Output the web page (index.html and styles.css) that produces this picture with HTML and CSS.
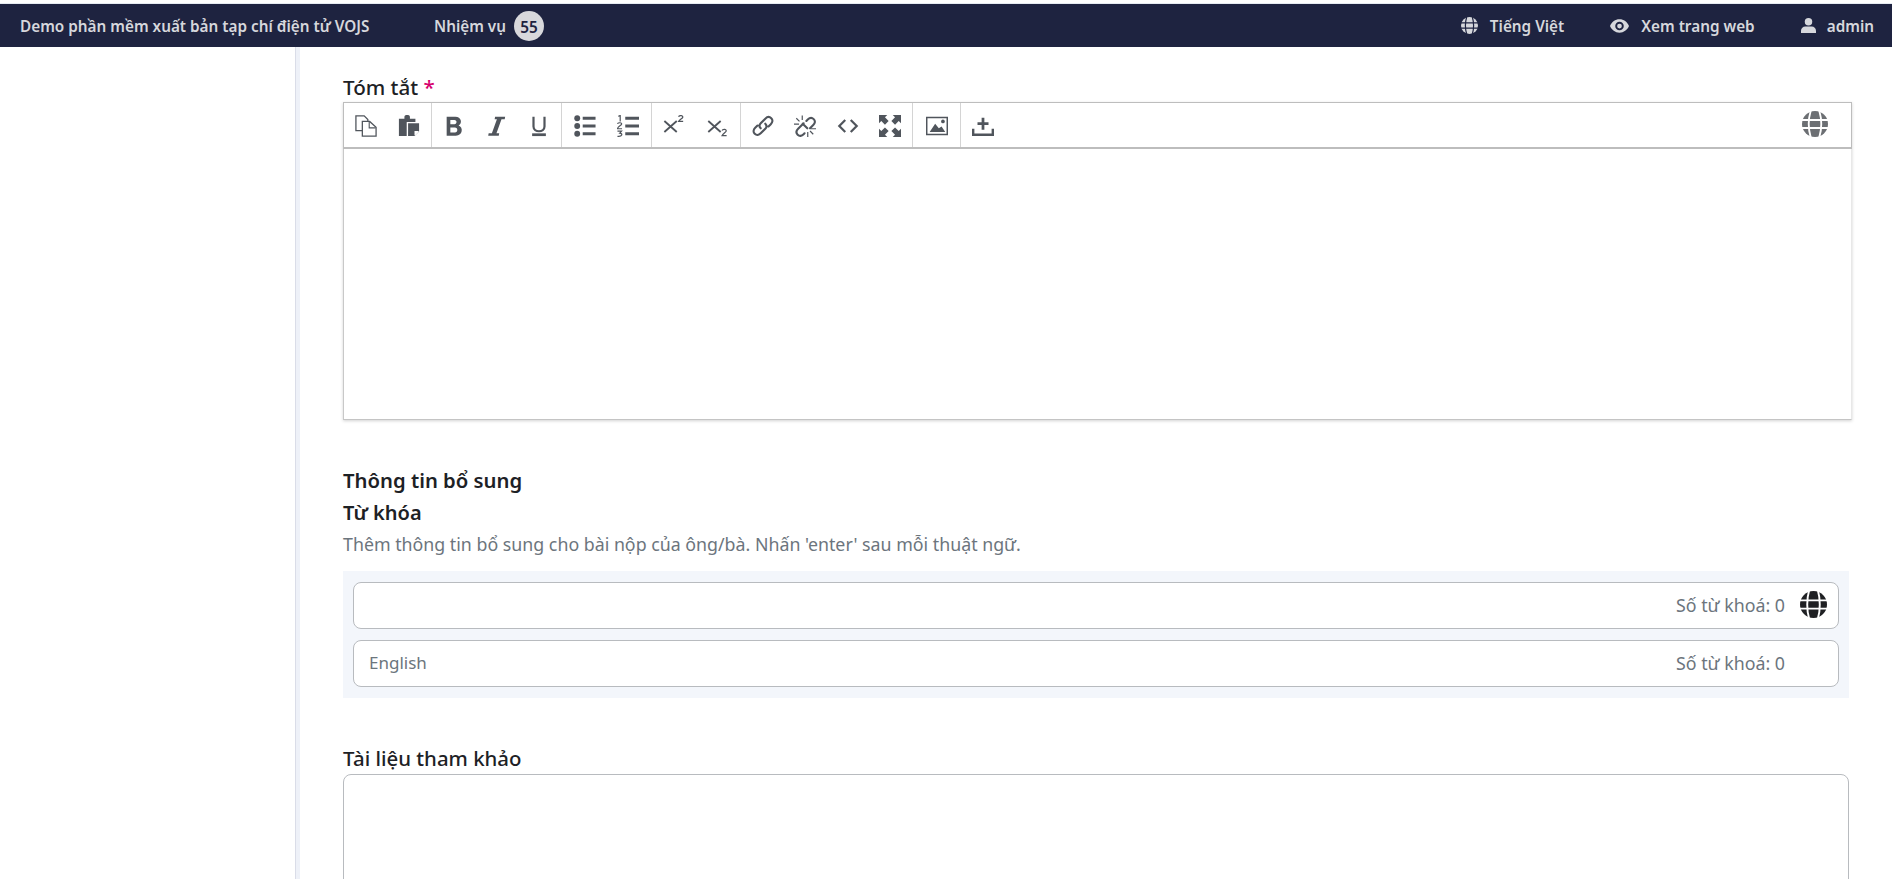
FILE: index.html
```html
<!DOCTYPE html>
<html lang="vi">
<head>
<meta charset="utf-8">
<title>Tóm tắt</title>
<link rel="stylesheet" href="styles.css">
</head>
<body>
<svg class="defs" width="0" height="0" aria-hidden="true">
  <symbol id="globe" viewBox="0 0 24 24">
    <circle cx="12" cy="12" r="12" fill="currentColor"/>
    <g fill="none" stroke="var(--gl, #fff)" stroke-width="1.7">
      <path d="M0 8.300H24M0 15.700H24"/>
      <path d="M8 0C5.900 7 5.900 17 8 24M16 0C18.100 7 18.100 17 16 24"/>
    </g>
  </symbol>
</svg>
<div class="top-strip"></div>
<header class="topbar">
  <div class="nav-left">
    <a class="brand">Demo phần mềm xuất bản tạp chí điện tử VOJS</a>
    <a class="tasks">Nhiệm vụ <span class="badge">55</span></a>
  </div>
  <div class="nav-right">
    <a class="nav-item"><svg class="nav-icon"><use href="#globe"/></svg>Tiếng Việt</a>
    <a class="nav-item">
      <svg class="nav-icon nav-eye" viewBox="0 0 20 14"><path fill="currentColor" fill-rule="evenodd" d="M10 0C5.500 0 1.800 2.800 0 7c1.800 4.200 5.500 7 10 7s8.200-2.800 10-7c-1.800-4.200-5.500-7-10-7zm0 11.500A4.500 4.500 0 1 1 10 2.500a4.500 4.500 0 0 1 0 9zM10 4.500a2.500 2.500 0 1 0 0 5 2.500 2.500 0 0 0 0-5z"/></svg>Xem trang web</a>
    <a class="nav-item">
      <svg class="nav-icon nav-user" viewBox="0 0 16 16"><circle cx="8" cy="4" r="4" fill="currentColor"/><path fill="currentColor" d="M0 16v-2.500C0 10.800 2.200 9 4.500 9h7c2.300 0 4.500 1.800 4.500 4.500V16z"/></svg>admin</a>
  </div>
</header>
<div class="page">
  <aside class="sidebar"></aside>
  <main class="content">
    <label class="field-label">Tóm tắt <span class="req">*</span></label>
    <section class="editor">
      <div class="toolbar">
        <div class="tb-group tb-first">
          <span class="tb-btn"><svg viewBox="0 0 24 24"><path fill="none" stroke="currentColor" stroke-width="1.400" d="M1 1h9l4 4v12H1z"/><path fill="#fff" stroke="currentColor" stroke-width="1.400" d="M8 7h8l7 6.500V23H8z"/><path fill="none" stroke="currentColor" stroke-width="1.200" d="M15.500 7.500v6.500h7"/></svg></span>
          <span class="tb-btn"><svg viewBox="0 0 24 24"><path fill="currentColor" d="M1 4h6V2c0-1 1-2 2-2h2c1 0 2 1 2 2v2h6v3.500H9.500V23H1z"/><path fill="currentColor" d="M11 9h12v9l-5 5h-7z"/><path fill="#fff" d="M18 22v-4.500h4.500v1l-3.500 3.500z"/></svg></span>
        </div>
        <div class="tb-group tb-format">
          <span class="tb-btn"><svg viewBox="0 0 24 24"><path fill="currentColor" fill-rule="evenodd" d="M4 2h9.500c6.500 0 8 7 3.500 9.500 5.500 2 4.500 11-3 11H4zm4 3.500v4.500h4.500c3 0 3-4.500 0-4.500zm0 8V19h5c3.500 0 3.500-5.500 0-5.500z"/></svg></span>
          <span class="tb-btn"><svg viewBox="0 0 24 24"><path fill="currentColor" d="M11 2h11l-.500 2.600h-3.500L12.500 20h3l-.500 2.600H3.500L4 20h3.500L13 4.600h-2.500z"/></svg></span>
          <span class="tb-btn"><svg viewBox="0 0 24 24"><path fill="none" stroke="currentColor" stroke-width="2.400" d="M6 2v10.500c0 7 12 7 12 0V2"/><path fill="currentColor" d="M4.500 20h15v3h-15z"/></svg></span>
        </div>
        <div class="tb-group">
          <span class="tb-btn"><svg viewBox="0 0 24 24"><g fill="currentColor"><circle cx="3.500" cy="3.500" r="3.200"/><circle cx="3.500" cy="12" r="3.200"/><circle cx="3.500" cy="20.500" r="3.200"/><path d="M9.500 2h14v3.200h-14zM9.500 10.400h14v3.200h-14zM9.500 18.800h14v3.200h-14z"/></g></svg></span>
          <span class="tb-btn"><svg viewBox="0 0 24 24"><g fill="currentColor"><path d="M9 2h15v3.200H9zM9 10.400h15v3.200H9zM9 18.800h15v3.200H9z"/></g><g fill="none" stroke="currentColor" stroke-width="1.300"><path d="M1.500 1.500l2-1V7M.5 9.500c1-1.500 5-1.500 4.500.5-.300 1.500-4 2.500-4.500 5H5.500M.5 17.500h4.500L3 19.800c3.500 0 3 4-2.500 3.500"/></g></svg></span>
        </div>
        <div class="tb-group tb-script">
          <span class="tb-btn"><svg viewBox="0 0 24 24"><path fill="none" stroke="currentColor" stroke-width="2" d="M1.500 6.500l13.500 12M15 6.500L1.500 18.500"/><path fill="none" stroke="currentColor" stroke-width="1.400" d="M17 2c.8-2 5-1.700 4.500.5-.3 1.300-3.500 2.500-4.500 4.500h5"/></svg></span>
          <span class="tb-btn"><svg viewBox="0 0 24 24"><path fill="none" stroke="currentColor" stroke-width="2" d="M2.500 6.500l13.500 12M16 6.500L2.500 18.500"/><path fill="none" stroke="currentColor" stroke-width="1.400" d="M17.500 17c.8-2 5-1.700 4.500.5-.3 1.300-3.500 2.500-4.500 5h5"/></svg></span>
        </div>
        <div class="tb-group tb-wide">
          <span class="tb-btn"><svg viewBox="0 0 24 24"><path fill="none" stroke="currentColor" stroke-width="2.300" stroke-linecap="round" d="M9.500 14.500c-1.800-1.800-1.800-3.700 0-5.500l5-5c2-2 4.500-2.500 6.500-.5s1.500 4.500-.5 6.500l-2.500 2.500M14.500 9.500c1.800 1.800 1.800 3.700 0 5.500l-5 5c-2 2-4.500 2.500-6.500.5s-1.500-4.500.5-6.500l2.500-2.500"/></svg></span>
          <span class="tb-btn"><svg viewBox="0 0 24 24"><path fill="none" stroke="currentColor" stroke-width="2.300" stroke-linecap="round" d="M13.500 6.500L15 5c2-2 4.500-2.500 6.500-.5s1.500 4.500-.5 6.500l-3.500 3.500M10.500 9l-6 6c-2 2-2.500 4.500-.5 6.500s4.500 1.500 6.500-.5l1-1M9.500 9.500l5 5"/><path fill="none" stroke="currentColor" stroke-width="1.300" d="M9 .500v5M2.500 3.500l3.500 3.500M0 10h5.500M24 15h-5.500M17.500 17.500l3.500 3.500M15 18.500V24"/></svg></span>
          <span class="tb-btn"><svg viewBox="0 0 24 24"><path fill="none" stroke="currentColor" stroke-width="2.400" d="M9 5.500L2.500 12 9 18.500M15 5.500l6.500 6.500-6.500 6.500"/></svg></span>
          <span class="tb-btn"><svg viewBox="0 0 24 24"><path fill="currentColor" d="M0 0h9L6.500 2.500l4 4-4 4-4-4L0 9zM24 0v9l-2.500-2.500-4 4-4-4 4-4L15 0zM0 24v-9l2.500 2.500 4-4 4 4-4 4L9 24zM24 24h-9l2.500-2.500-4-4 4-4 4 4L24 15z"/></svg></span>
        </div>
        <div class="tb-group tb-image">
          <span class="tb-btn"><svg viewBox="0 0 24 24"><path fill="none" stroke="currentColor" stroke-width="1.600" d="M.8 2.800h22.400v18.400H.8z"/><path fill="currentColor" d="M4 18.500l6-9 4 5 3-2 4 6z"/><circle cx="18.500" cy="7" r="2" fill="currentColor"/></svg></span>
        </div>
        <div class="tb-group tb-last">
          <span class="tb-btn"><svg viewBox="0 0 24 24"><path fill="none" stroke="currentColor" stroke-width="2.600" d="M1.300 15v6.500h21.400V15"/><path fill="currentColor" d="M10.500 3h3v5H18v3h-4.500v5h-3v-5H6V8h4.500z"/></svg></span>
        </div>
        <svg class="tb-globe"><use href="#globe"/></svg>
      </div>
      <div class="editor-body"></div>
    </section>

    <h3 class="section-title">Thông tin bổ sung</h3>
    <h4 class="sub-title">Từ khóa</h4>
    <p class="hint">Thêm thông tin bổ sung cho bài nộp của ông/bà. Nhấn 'enter' sau mỗi thuật ngữ.</p>
    <section class="keywords">
      <div class="kw-input">
        <span class="kw-text"></span>
        <span class="kw-count">Số từ khoá: 0</span>
        <svg class="kw-globe"><use href="#globe"/></svg>
      </div>
      <div class="kw-input">
        <span class="kw-text">English</span>
        <span class="kw-count">Số từ khoá: 0</span>
        <span class="kw-globe"></span>
      </div>
    </section>

    <label class="field-label refs-label">Tài liệu tham khảo</label>
    <div class="refs-box"></div>
  </main>
</div>
</body>
</html>
```

FILE: styles.css
```css
* { box-sizing: border-box; }
html, body { margin: 0; height: 879px; overflow: hidden; }
body {
  font-family: "Noto Sans", "Open Sans", sans-serif;
  background: #fff;
  color: #212529;
  display: flex;
  flex-direction: column;
}
.defs { position: absolute; }
.top-strip { flex: 0 0 4px; border-bottom: 1px solid #e6ebf2; }
.topbar {
  flex: 0 0 43px;
  background: #1e2340;
  color: #d6d7dc;
  display: flex;
  align-items: center;
  justify-content: space-between;
  font-size: 15.3px;
  font-weight: 600;
  padding: 0 18px 0 20px;
  --gl: #1e2340;
}
.nav-left, .nav-right, .nav-item, .tasks { display: flex; align-items: center; }
.nav-right { gap: 46px; }
.brand { width: 414px; }
.tasks { gap: 8px; }
.badge {
  width: 30px;
  height: 30px;
  border-radius: 50%;
  background: #d8d8dc;
  color: #1e2340;
  display: flex;
  align-items: center;
  justify-content: center;
  padding-top: 3px;
}
.nav-icon { width: 17px; height: 17px; margin-right: 12px; }
.nav-eye { width: 19px; height: 14px; }
.nav-user { width: 15px; height: 15px; margin-right: 11px; }
.page { flex: 1; display: flex; min-height: 0; }
.sidebar { flex: 0 0 296px; border-right: 1px solid #dadde8; }
.content {
  flex: 1;
  min-width: 0;
  border-left: 4px solid #eef1f8;
  padding: 25px 40px 0 43px;
}
.field-label { display: block; font-size: 20.6px; font-weight: 500; line-height: 30px; color: #1d2125; }
.req { color: #d6006e; }
.editor { width: 1509px; box-shadow: 0 1px 3px rgba(0,0,0,.18); }
.toolbar {
  height: 47px;
  border: 1px solid #bdbdbd;
  border-bottom-width: 2px;
  display: flex;
  align-items: stretch;
  position: relative;
}
.tb-group { display: flex; padding: 0 2px; border-right: 1px solid #d4d4d4; }
.tb-first { padding: 0 .5px 0 1px; }
.tb-format { padding: 0 1px; }
.tb-script { padding: 0 2px 0 1px; }
.tb-wide { padding: 0 .5px; }
.tb-image { padding: 0 1.500px 0 2.500px; }
.tb-last { border-right: 0; padding-left: 1px; }
.tb-btn {
  width: 42.5px;
  padding-top: 1px;
  display: flex;
  align-items: center;
  justify-content: center;
  color: #50555c;
}
.tb-btn svg { width: 22px; height: 22px; }
.tb-globe {
  width: 26px;
  height: 26px;
  position: absolute;
  right: 23px;
  top: 8px;
  color: #6c6f73;
}
.editor-body { height: 271px; border: 1px solid #e8e8e8; border-top: 0; border-bottom-color: #c4c4c4; border-left-color: #c8c8c8; }
.section-title, .sub-title { margin: 0; font-size: 20.3px; font-weight: 600; line-height: 30px; color: #1d2125; }
.section-title { margin-top: 45px; }
.sub-title { margin-top: 3px; font-size: 20px; }
.hint { margin: 3px 0 0; font-size: 17.8px; line-height: 26px; color: #6c757d; }
.keywords {
  width: 1506px;
  margin-top: 14px;
  padding: 11px 10px;
  background: #f3f6fb;
  display: flex;
  flex-direction: column;
  gap: 11px;
}
.kw-input {
  height: 47px;
  background: #fff;
  border: 1px solid #b8bbbf;
  border-radius: 8px;
  display: flex;
  align-items: center;
  padding: 0 11px 2px 15px;
  font-size: 17.8px;
  color: #6c757d;
}
.kw-text { flex: 1; font-size: 17px; }
.kw-count { margin-right: 15px; }
.kw-globe { width: 27px; height: 27px; color: #1f2023; }
.refs-label { margin-top: 45px; font-size: 20.4px; line-height: 31px; }
.refs-box {
  width: 1506px;
  height: 300px;
  border: 1px solid #b8bbbf;
  border-radius: 8px;
}
```
